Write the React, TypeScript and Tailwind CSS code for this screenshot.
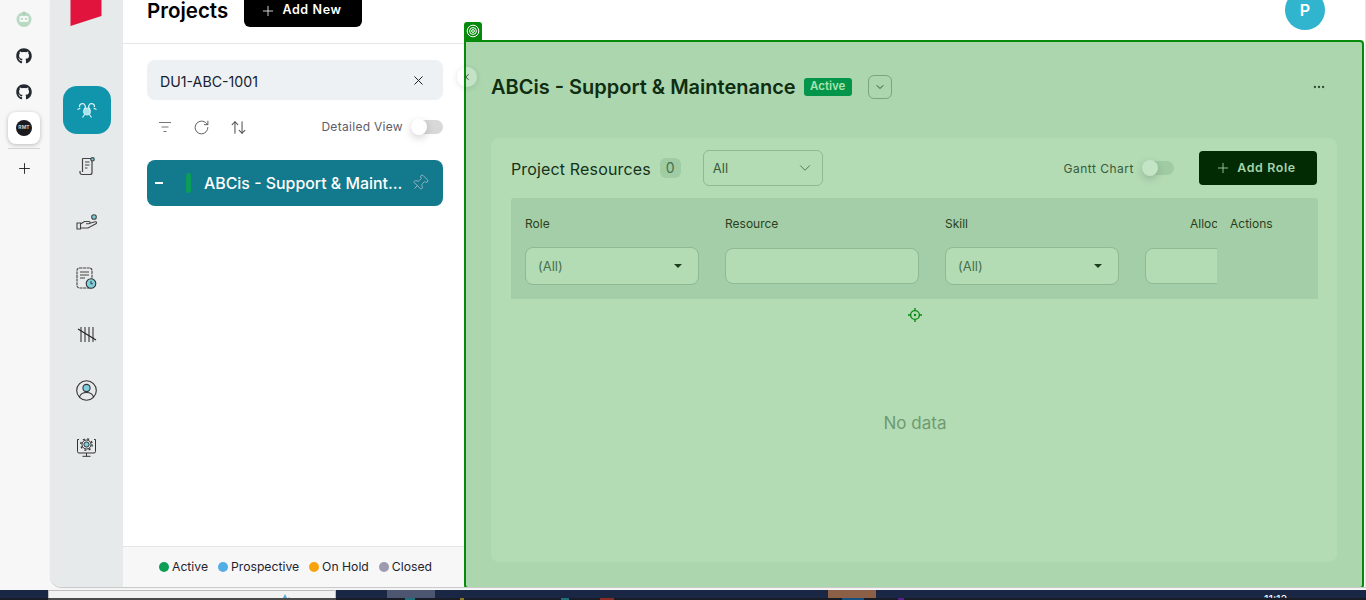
import React from 'react';
import { Plus, X, RotateCw, ArrowUpDown, ChevronDown, ChevronLeft, Ellipsis, Pin } from 'lucide-react';
import { FaGithub } from 'react-icons/fa';

const font = { fontFamily: 'Inter, "Liberation Sans", sans-serif' };

function TargetTag() {
  return (
    <svg width="14" height="14" viewBox="0 0 14 14" fill="none" stroke="#fff" strokeWidth="1">
      <circle cx="7" cy="7" r="5.8" />
      <circle cx="7" cy="7" r="3.4" />
      <circle cx="7" cy="7" r="1.4" />
    </svg>
  );
}

function Crosshair() {
  return (
    <svg width="14" height="14" viewBox="0 0 14 14" fill="none" stroke="#0a8a12" strokeWidth="1.4">
      <circle cx="7" cy="7" r="4.4" />
      <circle cx="7" cy="7" r="1.2" fill="#0a8a12" stroke="none" />
      <path d="M7 0v2.5M7 11.5V14M0 7h2.5M11.5 7H14" />
    </svg>
  );
}

function RobotIcon() {
  return (
    <svg width="16" height="16" viewBox="0 0 16 16">
      <circle cx="8" cy="8.5" r="7.5" fill="#b9d9c2" />
      <rect x="7.4" y="0.5" width="1.2" height="3.5" fill="#9cc4a8" />
      <rect x="3.5" y="5" width="9" height="6" rx="1" fill="#f2f7f3" />
      <circle cx="6" cy="7.8" r="0.9" fill="#9cc4a8" />
      <circle cx="10" cy="7.8" r="0.9" fill="#9cc4a8" />
    </svg>
  );
}

function TeamIcon() {
  return (
    <svg width="20" height="16" viewBox="0 0 20 16" fill="none" stroke="#e6f6f8" strokeWidth="1.1">
      <circle cx="10" cy="9.500" r="3.600" fill="#a6e3ee" stroke="#e6f6f8" strokeWidth="0.8" />
      <path d="M2.600 5.200a2.900 2.900 0 1 1 4.300 1.900M17.400 5.200a2.900 2.900 0 1 0-4.300 1.900" />
      <path d="M0.500 7.500l2.800-1.200M19.500 7.500l-2.800-1.200M5.500 15.500l2.100-3M14.500 15.500l-2.100-3" />
    </svg>
  );
}

function ScrollIcon() {
  return (
    <svg width="16" height="19" viewBox="0 0 16 19" fill="none" stroke="#444" strokeWidth="1.2">
      <path d="M3.500 1.500h9.500v14a2 2 0 0 1-2 2H3a2 2 0 0 1-2-2V14" />
      <path d="M3.500 1.500v13.500" />
      <path d="M6 5h4.500M6 8h4.500M6 11h2.500" />
      <circle cx="13.500" cy="2.300" r="1.700" fill="#7fd0de" />
    </svg>
  );
}

function HandIcon() {
  return (
    <svg width="22" height="17" viewBox="0 0 22 17" fill="none" stroke="#444" strokeWidth="1.1">
      <circle cx="18" cy="3" r="2.300" fill="#7fd0de" />
      <path d="M1 9h3.500v6H1zM4.500 10l4-2.500h4.500c1.500 0 1.500 2.200 0 2.200H10M13 9.500l6-1.700c1.600-.4 2.200 1.200.9 1.900L12 14l-7.500 0" />
    </svg>
  );
}

function DocClockIcon() {
  return (
    <svg width="21" height="23" viewBox="0 0 21 23" fill="none" stroke="#444" strokeWidth="1.1">
      <rect x="1" y="1" width="15" height="20" rx="2.500" strokeDasharray="3 0.6" />
      <path d="M4 5h9M4 8h9M4 11h5" />
      <circle cx="15" cy="16.500" r="4.800" fill="#7fd0de" stroke="#333" />
      <path d="M15 14v2.700h2" />
    </svg>
  );
}

function TallyIcon() {
  return (
    <svg width="20" height="17" viewBox="0 0 20 17" fill="none" stroke="#777" strokeWidth="1.7">
      <path d="M4 1v15M8 1v15M12 1v15M16 1v15" />
      <path d="M1 3l18 11" stroke="#222" strokeWidth="1.1" />
    </svg>
  );
}

function UserIcon() {
  return (
    <svg width="21" height="21" viewBox="0 0 21 21" fill="none" stroke="#333" strokeWidth="1.1">
      <circle cx="10.500" cy="10.500" r="9.800" />
      <circle cx="10.500" cy="8" r="3.600" fill="#7fd0de" />
      <path d="M3.500 17c1-3.400 3.500-4.500 7-4.500s6 1.100 7 4.500" />
    </svg>
  );
}

function GearMonitorIcon() {
  return (
    <svg width="21" height="21" viewBox="0 0 21 21" fill="none" stroke="#333" strokeWidth="1">
      <path d="M3 3.500H1.500v12a1.500 1.500 0 0 0 1.500 1.500h15a1.500 1.500 0 0 0 1.500-1.500v-12H18" />
      <path d="M10.500 17v3M6.500 20.300h8" />
      <circle cx="10.500" cy="8.500" r="5.700" strokeWidth="1.400" strokeDasharray="2 2.480" />
      <circle cx="10.500" cy="8.500" r="4.500" />
      <circle cx="10.500" cy="8.500" r="2.600" fill="#7fd0de" />
    </svg>
  );
}

function SortLines() {
  return (
    <svg width="14" height="12" viewBox="0 0 14 12" fill="none" stroke="#777" strokeWidth="1.2">
      <path d="M1 1.500h12M3.500 6h7M5.500 10.500h3" />
    </svg>
  );
}

function TinySwitch({ track, knob }: { track: string; knob: string }) {
  return (
    <div className={`relative h-[14px] w-[32px] rounded-full ${track}`}>
      <div className={`absolute -top-[1px] left-0 h-4 w-4 rounded-full shadow-[0_3px_8px_rgba(0,0,0,0.18)] ${knob}`} />
    </div>
  );
}

function Legend({ color, label }: { color: string; label: string }) {
  return (
    <span className="flex items-center gap-[3px]">
      <span className={`h-[10px] w-[10px] rounded-full ${color}`} />
      {label}
    </span>
  );
}

function ColumnSelect({ w }: { w: string }) {
  return (
    <div className={`flex h-[38px] items-center justify-between rounded-lg border border-[#8fb894] bg-[#b3dcb5] pl-3 pr-[16px] text-[13px] text-[#47704b] ${w}`}>
      <span className="pt-[2px]">(All)</span>
      <span className="h-0 w-0 border-x-[4px] border-t-[4px] border-x-transparent border-t-[#1e3d20]" />
    </div>
  );
}

function SidebarRow({ children }: { children: React.ReactNode }) {
  return <div className="flex h-14 flex-none items-center justify-center">{children}</div>;
}

export default function App() {
  return (
    <div style={font} className="flex h-[600px] w-[1366px] flex-col overflow-hidden bg-white text-black">
      <div className="flex h-[590px] flex-none bg-[#f7f7f7]">
        {/* app rail */}
        <div className="flex w-[50px] flex-none flex-col items-center pr-[2px] pt-[11px]">
          <div className="flex h-4 items-center"><RobotIcon /></div>
          <FaGithub className="mt-[21px] text-[#24292f]" size={16} />
          <FaGithub className="mt-[20px] text-[#24292f]" size={16} />
          <div className="mt-[12px] flex h-8 w-8 items-center justify-center rounded-lg bg-white shadow-[0_1px_4px_rgba(0,0,0,0.25)]">
            <span className="flex h-4 w-4 items-center justify-center rounded-full bg-[#1b1a1f] text-[5px] font-bold text-[#ccc]">RMT</span>
          </div>
          <div className="mt-1 h-px w-8 bg-[#d5d5d5]" />
          <Plus className="mt-[11px] text-[#111]" size={17} strokeWidth={1.2} />
        </div>

        {/* shell */}
        <div className="flex h-[587px] flex-1 overflow-hidden rounded-bl-xl shadow-[0_1px_1px_rgba(0,0,0,0.2)]">
          <div className="flex w-[73px] flex-none flex-col items-center bg-[#e6eaeb]">
            <svg width="32" height="26" viewBox="0 0 32 26" className="flex-none -translate-x-[1px]">
              <path d="M0.500 0H31.500V16L0.500 26Z" fill="#e0143c" />
            </svg>
            <div className="mb-1 mt-[60px] flex h-12 w-12 flex-none items-center justify-center rounded-[14px] bg-[#1195ad]"><TeamIcon /></div>
            <SidebarRow><ScrollIcon /></SidebarRow>
            <SidebarRow><HandIcon /></SidebarRow>
            <SidebarRow><DocClockIcon /></SidebarRow>
            <SidebarRow><TallyIcon /></SidebarRow>
            <SidebarRow><UserIcon /></SidebarRow>
            <SidebarRow><GearMonitorIcon /></SidebarRow>
          </div>

          <div className="flex w-[342px] flex-none flex-col bg-white">
            <div className="flex h-[44px] flex-none items-end gap-4 overflow-hidden border-b border-[#e3e5e8] pb-4 pl-6">
              <h1 className="mb-1 w-[81px] flex-none whitespace-nowrap text-[20.500px] font-semibold leading-[24px]">Projects</h1>
              <button className="flex h-[36px] w-[118px] flex-none items-center justify-center gap-[6px] rounded-md bg-black pr-[4px] pt-[3px] text-[12.500px] font-semibold tracking-wider text-white">
                <Plus size={16} strokeWidth={1.4} className="text-[#ddd]" />
                Add New
              </button>
            </div>

            <div className="flex flex-1 flex-col pl-6 pr-[22px] pt-4">
              <div className="flex h-10 items-center justify-between rounded-lg bg-[#eef1f4] pl-[13px] pr-[17px] text-[14.200px] text-[#16222e]">
                <span className="pt-[3px]">DU1-ABC-1001</span>
                <X size={15} strokeWidth={1.6} className="text-[#222]" />
              </div>
              <div className="mt-[18px] flex h-[18px] items-center pl-[11px]">
                <SortLines />
                <RotateCw size={17} strokeWidth={1.3} className="ml-[21px] text-[#555]" />
                <ArrowUpDown size={17} strokeWidth={1.5} className="ml-[20px] text-[#555]" />
                <span className="ml-auto text-xs tracking-wide text-[#5d5d6b]">Detailed View</span>
                <div className="ml-[8px]"><TinySwitch track="bg-[#d8d8d8]" knob="bg-white" /></div>
              </div>
              <div className="mt-[24px] flex h-[46px] items-center rounded-lg bg-[#127a8c] pl-2 pr-[14px] text-white">
                <span className="h-[2px] w-2 flex-none bg-white" />
                <span className="ml-[23px] h-5 w-[5px] flex-none rounded-full bg-[#0c9d58]" />
                <span className="ml-[13px] flex-1 truncate pt-[2px] text-[15.900px] font-medium">ABCis - Support &amp; Maint...</span>
                <Pin size={18} strokeWidth={1.2} className="flex-none rotate-45 text-[#a3b6c6]" />
              </div>
            </div>

            <div className="flex h-[41px] flex-none items-center justify-center gap-[10px] border-t border-[#e3e5e8] bg-[#f7f7f7] pl-[3px] text-[12.200px] text-[#1f2430]">
              <Legend color="bg-[#0c9d58]" label="Active" />
              <Legend color="bg-[#54aee6]" label="Prospective" />
              <Legend color="bg-[#f8a30e]" label="On Hold" />
              <Legend color="bg-[#9d9bb0]" label="Closed" />
            </div>
          </div>

          {/* right side with highlighted region */}
          <div className="flex min-w-0 flex-1 flex-col bg-white">
            <div className="relative flex h-[40px] flex-none justify-end overflow-hidden pr-[40px]">
              <div className="-mt-[10px] flex h-10 w-10 items-center justify-center rounded-full bg-[#31b4ce] text-base font-semibold text-white">P</div>
            </div>
            <div className="relative -ml-[1px] mb-[-2px] mr-[1px] flex min-h-0 flex-1 flex-col rounded-r-[4px] rounded-bl-[4px] border-2 border-[#078a0c] bg-[#acd6ae] px-[25px] text-[#0f2d10]">
              <div className="absolute -left-[2px] -top-[20px] flex h-[18px] w-[18px] items-center justify-center rounded-t-[3px] bg-[#078a0c]"><TargetTag /></div>
              <div className="absolute -left-[9px] top-[25px] flex h-5 w-5 items-center justify-start rounded-full bg-[linear-gradient(90deg,#fff_0_7px,#078a0c_7px_9px,#c4e3c6_9px)] pl-[5px] text-[#243f25] shadow-[0_1px_6px_rgba(0,0,0,0.12)]">
                <ChevronLeft size={10} strokeWidth={2.2} />
              </div>

              <div className="mt-[32px] flex h-[26px] flex-none items-center">
                <h2 className="text-[20px] font-semibold">ABCis - Support &amp; Maintenance</h2>
                <span className="ml-2 flex h-[18px] w-[48px] items-center justify-center rounded-[3px] bg-[#03964a] text-[11.500px] font-semibold text-[#a8e3b0]">Active</span>
                <span className="ml-4 flex h-6 w-6 items-center justify-center rounded-md border border-[#7ba47e]"><ChevronDown size={12} strokeWidth={1.6} /></span>
                <Ellipsis size={14} className="ml-auto mr-[11px] text-[#2e4a30]" />
              </div>

              <div className="mt-[38px] flex h-[424px] flex-none flex-col rounded-lg bg-[#b3dcb5] px-5 pt-3">
                <div className="flex h-9 flex-none items-center">
                  <span className="mt-[2px] text-[16px] font-normal tracking-[0.15px] text-[#16321a]">Project Resources</span>
                  <span className="ml-[9px] flex h-5 w-[21px] items-center justify-center rounded-md bg-[#a0cca4] text-sm text-[#47704b]">0</span>
                  <div className="ml-[22px] flex h-9 w-[120px] items-center justify-between rounded-md border border-[#8fb894] pl-[9px] pr-[8px] text-[13px] text-[#375a3a]">
                    <span className="pt-[2px]">All</span>
                    <ChevronDown size={18} strokeWidth={1.2} className="text-[#47704b]" />
                  </div>
                  <span className="ml-auto mt-[2px] text-xs tracking-[0.5px] text-[#375a3a]">Gantt Chart</span>
                  <div className="ml-2 mr-[25px]"><TinySwitch track="bg-[#a0cca4]" knob="bg-[#c4e4c6]" /></div>
                  <button className="flex h-[34px] w-[118px] items-center justify-center gap-[6px] rounded-[4px] bg-[#022b03] pr-[5px] text-[12.400px] font-semibold tracking-wider text-[#a7d3aa]">
                    <Plus size={16} strokeWidth={1.3} />
                    Add Role
                  </button>
                </div>

                <div className="mt-[12px] flex h-[101px] w-[807px] flex-none rounded-t-[3px] bg-[#a3cea7] pl-[14px] text-xs text-[#2c3f1c]">
                  <div className="w-[200px] flex-none pt-[18px]">
                    <div className="mb-[16px] leading-[15px]">Role</div>
                    <ColumnSelect w="w-[174px]" />
                  </div>
                  <div className="w-[220px] flex-none pt-[18px]">
                    <div className="mb-[17px] leading-[15px]">Resource</div>
                    <div className="h-9 w-[194px] rounded-lg border border-[#8fb894] bg-[#b3dcb5]" />
                  </div>
                  <div className="w-[200px] flex-none pt-[18px]">
                    <div className="mb-[16px] leading-[15px]">Skill</div>
                    <ColumnSelect w="w-[174px]" />
                  </div>
                  <div className="w-[72px] flex-none overflow-hidden pt-[18px]">
                    <div className="mb-[17px] ml-[45px] whitespace-nowrap leading-[15px]">Allocation</div>
                    <div className="h-9 w-[120px] rounded-lg border border-[#8fb894] bg-[#b3dcb5]" />
                  </div>
                  <div className="ml-[13px] flex-1 pt-[18px] leading-[15px]">Actions</div>
                </div>

                <div className="flex flex-1 flex-col items-center pl-[2px] pt-[9px] text-[#6f9a72]">
                  <Crosshair />
                  <span className="mt-[89px] text-[17px]">No data</span>
                </div>
              </div>
            </div>
          </div>
          <div className="w-[1px] flex-none bg-[#e5e5e5]" />
        </div>
      </div>

      {/* taskbar */}
      <div className="flex h-[10px] flex-none flex-col overflow-hidden">
        <div className="flex h-2 flex-none bg-[#1a2744]">
          <div className="ml-[48px] flex w-[288px] justify-end border-x border-t border-[#bdbdbd] bg-[#f2f2f2] pr-[43px] pt-[3px]">
            <svg width="10" height="6" viewBox="0 0 10 6">
              <path d="M3 0L6 6H0Z" fill="#5aa7e0" />
              <path d="M7 3L10 6H4Z" fill="#8fc4ea" />
            </svg>
          </div>
          <div className="ml-[51px] w-[48px] flex-none bg-[#4c5670]" />
          <div className="ml-[393px] w-[48px] flex-none bg-[#8c5f47]" />
          <span className="ml-[388px] mt-[3px] flex-none text-[11px] leading-[12px] text-white">11:12</span>
        </div>
        <div className="flex h-[2px] flex-none bg-[#1a1c25]">
          <div className="ml-[48px] w-[288px] flex-none bg-[#4a4a4a]" />
          <div className="ml-[69px] w-[10px] flex-none bg-[#1d6f7a]" />
          <div className="ml-[45px] w-[4px] flex-none bg-[#8a7a20]" />
          <div className="ml-[97px] w-[8px] flex-none bg-[#1d6f7a]" />
          <div className="ml-[31px] w-[14px] flex-none bg-[#8a2a20]" />
          <div className="ml-[228px] w-[22px] flex-none bg-[#14507f]" />
          <div className="ml-[34px] w-[6px] flex-none bg-[#55208a]" />
        </div>
      </div>
    </div>
  );
}
